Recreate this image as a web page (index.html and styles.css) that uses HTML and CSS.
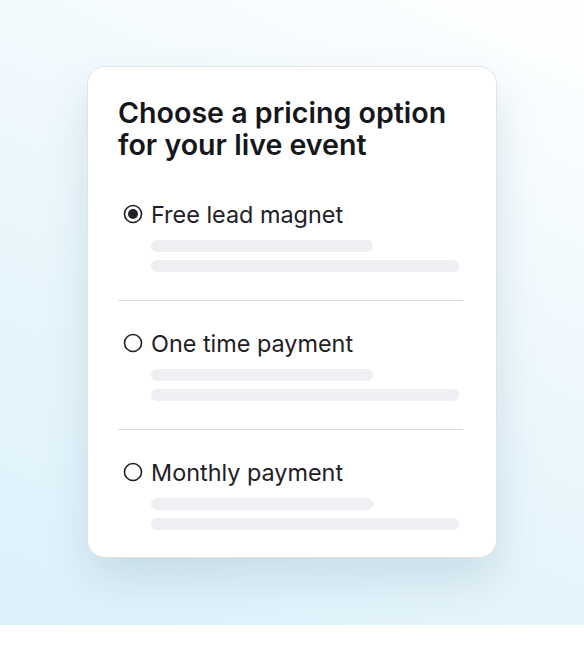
FILE: index.html
```html
<!DOCTYPE html>
<html lang="en">
<head>
    <meta charset="UTF-8">
    <title>Pricing option</title>
    <link rel="stylesheet" href="styles.css">
</head>
<body>
    <div class="stage">
        <div class="card">
            <h1>Choose a pricing option for your live event</h1>
            <div class="options">
                <div class="option">
                    <div class="option-row">
                        <svg class="radio" viewBox="0 0 24 24" width="24" height="24">
                            <circle cx="12" cy="12" r="8.5" fill="none" stroke="#1f2126" stroke-width="1.6"/>
                            <circle cx="12" cy="12" r="5" fill="#1f2126"/>
                        </svg>
                        <span>Free lead magnet</span>
                    </div>
                    <div class="skeleton">
                        <div class="bar short"></div>
                        <div class="bar long"></div>
                    </div>
                </div>
                <div class="option">
                    <div class="option-row">
                        <svg class="radio" viewBox="0 0 24 24" width="24" height="24">
                            <circle cx="12" cy="12" r="8.5" fill="none" stroke="#1f2126" stroke-width="1.6"/>
                        </svg>
                        <span>One time payment</span>
                    </div>
                    <div class="skeleton">
                        <div class="bar short"></div>
                        <div class="bar long"></div>
                    </div>
                </div>
                <div class="option">
                    <div class="option-row">
                        <svg class="radio" viewBox="0 0 24 24" width="24" height="24">
                            <circle cx="12" cy="12" r="8.5" fill="none" stroke="#1f2126" stroke-width="1.6"/>
                        </svg>
                        <span>Monthly payment</span>
                    </div>
                    <div class="skeleton">
                        <div class="bar short"></div>
                        <div class="bar long"></div>
                    </div>
                </div>
            </div>
        </div>
    </div>
</body>
</html>
```

FILE: styles.css
```css
* {
    box-sizing: border-box;
    margin: 0;
    padding: 0;
}

body {
    font-family: Inter, "Noto Sans", sans-serif;
    background-color: #fff;
    color: #1e2025;
}

.stage {
    height: 625px;
    padding-top: 66px;
    display: flex;
    justify-content: center;
    align-items: flex-start;
    background: linear-gradient(25deg, #dcf1fb 0%, #e9f6fc 45%, #f5fbfe 75%, #ffffff 100%);
}

.card {
    width: 410px;
    height: 492px;
    padding: 30px 33px 26px 30px;
    background-color: #fff;
    border: 1px solid #e2e3e5;
    border-radius: 18px;
    box-shadow: 0 22px 40px rgba(110, 145, 165, 0.22);
}

h1 {
    font-size: 28.6px;
    line-height: 32px;
    font-weight: 600;
    color: #16171b;
}

.options {
    margin-top: 39px;
}

.option {
    padding-bottom: 28px;
    border-bottom: 1px solid #dcdcde;
}

.option + .option {
    padding-top: 28px;
}

.option:last-child {
    border-bottom: none;
    padding-bottom: 0;
}

.option-row {
    display: flex;
    align-items: center;
    gap: 6px;
    height: 28px;
    font-size: 23.4px;
}

.radio {
    margin-left: 3px;
    flex-shrink: 0;
}

.skeleton {
    margin-top: 12px;
    padding-left: 33px;
    display: flex;
    flex-direction: column;
    gap: 8px;
}

.bar {
    height: 12px;
    border-radius: 6px;
    background-color: #eeeff3;
}

.bar.short {
    width: 222px;
}

.bar.long {
    width: 308px;
}
```
